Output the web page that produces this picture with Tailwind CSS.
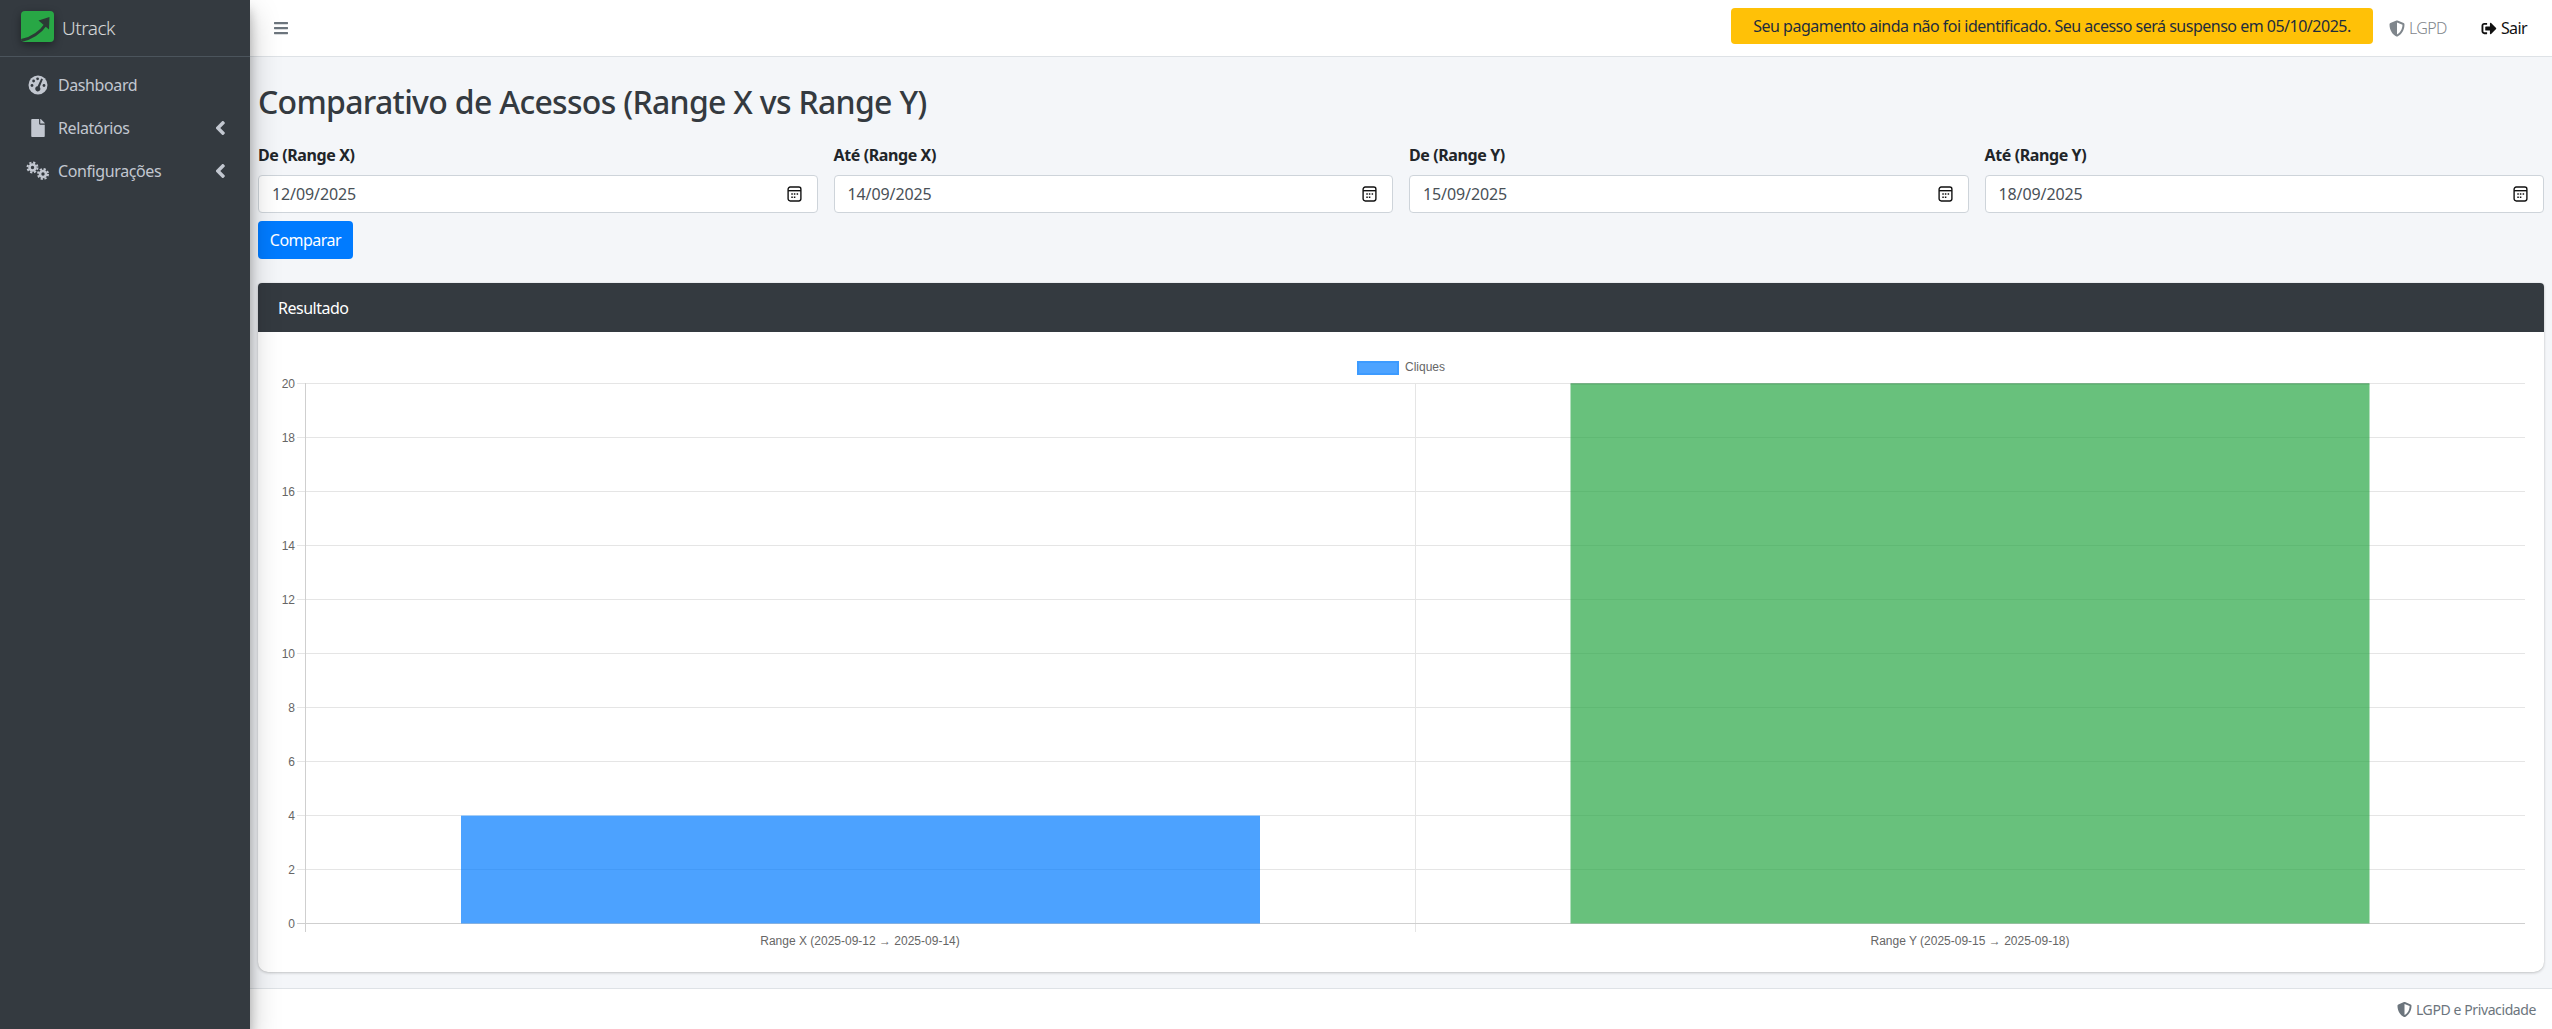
<!DOCTYPE html>
<html lang="pt-BR">
<head>
  <meta charset="UTF-8">
  <title>Utrack - Comparativo de Acessos</title>
  <script src="https://cdn.jsdelivr.net/npm/@tailwindcss/browser@4"></script>
</head>
<body class="flex h-screen overflow-hidden bg-[#f4f6f9] text-[#212529] font-['Noto_Sans',sans-serif]">

  <!-- sidebar -->
  <aside class="relative z-10 w-[250px] shrink-0 bg-[#343a40] shadow-[0_14px_28px_rgba(0,0,0,0.25),0_10px_10px_rgba(0,0,0,0.22)]">
    <div class="flex h-[57px] items-center border-b border-[#4b545c] pl-[21px] pb-[3px]">
      <svg class="h-[31px] w-[33px] rounded-[4px] shadow-[0_3px_8px_rgba(0,0,0,0.4)]" viewBox="0 0 33 31">
        <rect width="33" height="31" fill="#28a745"/>
        <path d="M0 29.5 C11 27.5 19 22 26 12" fill="none" stroke="#2b3a35" stroke-width="3"/>
        <path d="M17.5 9.5 L28.5 6 L28 18.5 Z" fill="#2b3a35"/>
      </svg>
      <span class="ml-2 pt-[3px] text-[19px] font-light tracking-[-0.5px] text-white/80">Utrack</span>
    </div>
    <nav class="pt-[6px] text-[16px] tracking-[-0.4px] text-[#c2c7d0]">
      <a class="flex h-[43px] items-center pl-[28px]">
        <svg class="w-[20px] h-[20px]" viewBox="0 0 20 20">
          <circle cx="10" cy="10" r="9.5" fill="currentColor"/>
          <g fill="#343a40">
            <circle cx="4" cy="10.5" r="1.4"/>
            <circle cx="5.6" cy="6" r="1.4"/>
            <circle cx="9.6" cy="3.8" r="1.4"/>
            <circle cx="16" cy="10.5" r="1.4"/>
            <path d="M13.2 3.6 L14.9 4.2 L11.7 12 A2.6 2.6 0 1 1 9.6 11.2 Z"/>
          </g>
        </svg>
        <span class="ml-[10px]">Dashboard</span>
      </a>
      <a class="flex h-[43px] items-center pl-[31px] pr-[25px]">
        <svg class="w-[14px] h-[18px] fill-current" viewBox="0 0 384 512"><path d="M224 136V0H24C10.7 0 0 10.7 0 24v464c0 13.3 10.7 24 24 24h336c13.3 0 24-10.7 24-24V160H248c-13.2 0-24-10.8-24-24zm160-14.1v6.1H256V0h6.1c6.4 0 12.5 2.5 17 7l97.9 98c4.5 4.5 7 10.6 7 16.9z"/></svg>
        <span class="ml-[13px] flex-1">Relatórios</span>
        <svg class="w-[9px] h-[14px] fill-current" viewBox="32 96 200 320"><path d="M31.7 239l136-136c9.4-9.4 24.6-9.4 33.9 0l22.6 22.6c9.4 9.4 9.4 24.6 0 33.9L127.9 256l96.4 96.4c9.4 9.4 9.4 24.6 0 33.9L201.7 409c-9.4 9.4-24.6 9.4-33.9 0l-136-136c-9.5-9.4-9.5-24.6-.1-34z"/></svg>
      </a>
      <a class="flex h-[43px] items-center pl-[26px] pr-[25px]">
        <svg class="w-[23px] h-[20px]" viewBox="0 0 23 20" fill="none" stroke="currentColor">
          <circle cx="6.5" cy="6.5" r="3" stroke-width="2.6"/>
          <circle cx="6.5" cy="6.5" r="5" stroke-width="2" stroke-dasharray="2.2 1.73"/>
          <circle cx="17" cy="13" r="3" stroke-width="2.6"/>
          <circle cx="17" cy="13" r="5" stroke-width="2" stroke-dasharray="2.2 1.73"/>
        </svg>
        <span class="ml-[9px] flex-1">Configurações</span>
        <svg class="w-[9px] h-[14px] fill-current" viewBox="32 96 200 320"><path d="M31.7 239l136-136c9.4-9.4 24.6-9.4 33.9 0l22.6 22.6c9.4 9.4 9.4 24.6 0 33.9L127.9 256l96.4 96.4c9.4 9.4 9.4 24.6 0 33.9L201.7 409c-9.4 9.4-24.6 9.4-33.9 0l-136-136c-9.5-9.4-9.5-24.6-.1-34z"/></svg>
      </a>
    </nav>
  </aside>

  <div class="flex min-w-0 flex-1 flex-col">
    <!-- top navbar -->
    <header class="flex h-[57px] shrink-0 items-center border-b border-[#dee2e6] bg-white pl-[24px] pr-[25px] text-[16px] tracking-[-0.6px]">
      <svg class="w-[14px] h-[16px] fill-[#6c757d]" viewBox="0 0 448 512"><path d="M16 132h416c8.837 0 16-7.163 16-16V76c0-8.837-7.163-16-16-16H16C7.163 60 0 67.163 0 76v40c0 8.837 7.163 16 16 16zm0 160h416c8.837 0 16-7.163 16-16v-40c0-8.837-7.163-16-16-16H16c-8.837 0-16 7.163-16 16v40c0 8.837 7.163 16 16 16zm0 160h416c8.837 0 16-7.163 16-16v-40c0-8.837-7.163-16-16-16H16c-8.837 0-16 7.163-16 16v40c0 8.837 7.163 16 16 16z"/></svg>
      <div class="ml-auto mb-[4px] flex h-[36px] w-[642px] items-center justify-center rounded-[4px] bg-[#ffc107] text-[16px] tracking-[-0.5px] text-[#1f2d3d]">Seu pagamento ainda não foi identificado. Seu acesso será suspenso em 05/10/2025.</div>
      <a class="ml-[16px] flex items-center font-light text-[#7f868c]">
        <svg class="w-[16px] h-[17px] fill-current" viewBox="0 0 512 512"><path d="M466.5 83.7l-192-80a48.15 48.15 0 0 0-36.9 0l-192 80C27.7 91.1 16 108.6 16 128c0 198.5 114.5 335.7 221.5 380.3 11.8 4.9 25.1 4.9 36.9 0C360.1 472.6 496 349.3 496 128c0-19.4-11.7-36.9-29.5-44.3zM256.1 446.3l-.1-381 175.9 73.3c-3.3 151.4-82.1 261.1-175.8 307.7z"/></svg>
        <span class="ml-[4px]">LGPD</span>
      </a>
      <a class="ml-[33px] flex items-center text-[#111]">
        <svg class="w-[18px] h-[15px] fill-current" viewBox="0 0 512 512"><path d="M497 273L329 441c-15 15-41 4.5-41-17v-96H152c-13.3 0-24-10.7-24-24v-96c0-13.3 10.7-24 24-24h136V88c0-21.4 25.9-32 41-17l168 168c9.3 9.4 9.3 24.6 0 34zM192 436v-40c0-6.6-5.4-12-12-12H96c-17.7 0-32-14.3-32-32V160c0-17.7 14.3-32 32-32h84c6.6 0 12-5.4 12-12V76c0-6.6-5.4-12-12-12H96c-53 0-96 43-96 96v192c0 53 43 96 96 96h84c6.6 0 12-5.4 12-12z"/></svg>
        <span class="ml-[3px]">Sair</span>
      </a>
    </header>

    <!-- content -->
    <main class="min-h-0 flex-1 pl-[8px] pr-[8px] pt-[20px]">
      <h1 class="h-[50px] text-[32px] leading-[50px] font-medium tracking-[-0.7px] text-[#343a40]">Comparativo de Acessos (Range X vs Range Y)</h1>

      <form class="mt-[16px] grid grid-cols-4 gap-x-[16px]">
        <div>
          <label class="block h-[24px] text-[16px] leading-[24px] font-bold tracking-[-0.4px]">De (Range X)</label>
          <div class="mt-[8px] flex h-[38px] items-center rounded-[4px] border border-[#ced4da] bg-white pl-[13px] pr-[15px]">
            <input type="text" value="12/09/2025" class="min-w-0 flex-1 text-[16px] tracking-[-0.1px] text-[#495057] outline-none">
            <svg class="w-[15px] h-[16px]" viewBox="0 0 14 15" fill="none" stroke="#111" stroke-width="1.3"><rect x="1" y="1" width="12" height="13" rx="2"/><path d="M1 4.4H13"/><path d="M4 7.5h1.4M6.4 7.5h1.4M9 7.5h1.4M4 10.5h1.4M6.4 10.5h1.4"/></svg>
          </div>
        </div>
        <div>
          <label class="block h-[24px] text-[16px] leading-[24px] font-bold tracking-[-0.4px]">Até (Range X)</label>
          <div class="mt-[8px] flex h-[38px] items-center rounded-[4px] border border-[#ced4da] bg-white pl-[13px] pr-[15px]">
            <input type="text" value="14/09/2025" class="min-w-0 flex-1 text-[16px] tracking-[-0.1px] text-[#495057] outline-none">
            <svg class="w-[15px] h-[16px]" viewBox="0 0 14 15" fill="none" stroke="#111" stroke-width="1.3"><rect x="1" y="1" width="12" height="13" rx="2"/><path d="M1 4.4H13"/><path d="M4 7.5h1.4M6.4 7.5h1.4M9 7.5h1.4M4 10.5h1.4M6.4 10.5h1.4"/></svg>
          </div>
        </div>
        <div>
          <label class="block h-[24px] text-[16px] leading-[24px] font-bold tracking-[-0.4px]">De (Range Y)</label>
          <div class="mt-[8px] flex h-[38px] items-center rounded-[4px] border border-[#ced4da] bg-white pl-[13px] pr-[15px]">
            <input type="text" value="15/09/2025" class="min-w-0 flex-1 text-[16px] tracking-[-0.1px] text-[#495057] outline-none">
            <svg class="w-[15px] h-[16px]" viewBox="0 0 14 15" fill="none" stroke="#111" stroke-width="1.3"><rect x="1" y="1" width="12" height="13" rx="2"/><path d="M1 4.4H13"/><path d="M4 7.5h1.4M6.4 7.5h1.4M9 7.5h1.4M4 10.5h1.4M6.4 10.5h1.4"/></svg>
          </div>
        </div>
        <div>
          <label class="block h-[24px] text-[16px] leading-[24px] font-bold tracking-[-0.4px]">Até (Range Y)</label>
          <div class="mt-[8px] flex h-[38px] items-center rounded-[4px] border border-[#ced4da] bg-white pl-[13px] pr-[15px]">
            <input type="text" value="18/09/2025" class="min-w-0 flex-1 text-[16px] tracking-[-0.1px] text-[#495057] outline-none">
            <svg class="w-[15px] h-[16px]" viewBox="0 0 14 15" fill="none" stroke="#111" stroke-width="1.3"><rect x="1" y="1" width="12" height="13" rx="2"/><path d="M1 4.4H13"/><path d="M4 7.5h1.4M6.4 7.5h1.4M9 7.5h1.4M4 10.5h1.4M6.4 10.5h1.4"/></svg>
          </div>
        </div>
      </form>
      <button class="mt-[8px] h-[38px] w-[95px] rounded-[4px] bg-[#007bff] text-[16px] tracking-[-0.5px] text-white">Comparar</button>

      <!-- result card -->
      <section class="mt-[24px] rounded-t-[4px] rounded-b-[10px] bg-white shadow-[0_0_1px_rgba(0,0,0,0.125),0_1px_3px_rgba(0,0,0,0.2)]">
        <div class="flex h-[49px] items-center rounded-t-[4px] bg-[#343a40] pl-[20px] text-[16px] tracking-[-0.5px] text-white">Resultado</div>
        <svg class="block h-[640px] w-full font-['Liberation_Sans',sans-serif] text-[12px]" viewBox="258 332 2286 640" fill="#666">
          <!-- legend -->
          <rect x="1358" y="362" width="40" height="12" fill="#4da3ff" stroke="#3d9bff" stroke-width="2"/>
          <text x="1405" y="371">Cliques</text>
          <!-- grid -->
          <g stroke="#e5e5e5">
            <path d="M297 383.5H2525M297 437.5H2525M297 491.5H2525M297 545.5H2525M297 599.5H2525M297 653.5H2525M297 707.5H2525M297 761.5H2525M297 815.5H2525M297 869.5H2525"/>
            <path d="M1415.5 383V932"/>
          </g>
          <path d="M305.5 383V932M297 923.5H2525" stroke="#cfcfcf"/>
          <!-- bars -->
          <rect x="461" y="815.5" width="799" height="108" fill="#007bff" fill-opacity="0.7"/>
          <rect x="1570.5" y="384" width="799" height="539.5" fill="#28a745" fill-opacity="0.7"/>
          <path d="M1570.5 383.8H2369.5" stroke="#4b9a5e"/>
          <path d="M461 815.5H1260" stroke="#a5cdf5"/>
          <!-- y axis -->
          <g text-anchor="end">
            <text x="295" y="387.5">20</text>
            <text x="295" y="441.5">18</text>
            <text x="295" y="495.5">16</text>
            <text x="295" y="549.5">14</text>
            <text x="295" y="603.5">12</text>
            <text x="295" y="657.5">10</text>
            <text x="295" y="711.5">8</text>
            <text x="295" y="765.5">6</text>
            <text x="295" y="819.5">4</text>
            <text x="295" y="873.5">2</text>
            <text x="295" y="927.5">0</text>
          </g>
          <!-- x axis -->
          <g text-anchor="middle">
            <text x="860" y="945">Range X (2025-09-12 → 2025-09-14)</text>
            <text x="1970" y="945">Range Y (2025-09-15 → 2025-09-18)</text>
          </g>
        </svg>
      </section>
    </main>

    <!-- footer -->
    <footer class="flex h-[41px] shrink-0 items-center justify-end border-t border-[#dee2e6] bg-white pr-[16px] text-[14px] tracking-[-0.4px] text-[#6c757d]">
      <svg class="w-[15px] h-[17px] fill-current" viewBox="0 0 512 512"><path d="M466.5 83.7l-192-80a48.15 48.15 0 0 0-36.9 0l-192 80C27.7 91.1 16 108.6 16 128c0 198.5 114.5 335.7 221.5 380.3 11.8 4.9 25.1 4.9 36.9 0C360.1 472.6 496 349.3 496 128c0-19.4-11.7-36.9-29.5-44.3zM256.1 446.3l-.1-381 175.9 73.3c-3.3 151.4-82.1 261.1-175.8 307.7z"/></svg>
      <span class="ml-[4px]">LGPD e Privacidade</span>
    </footer>
  </div>
</body>
</html>
